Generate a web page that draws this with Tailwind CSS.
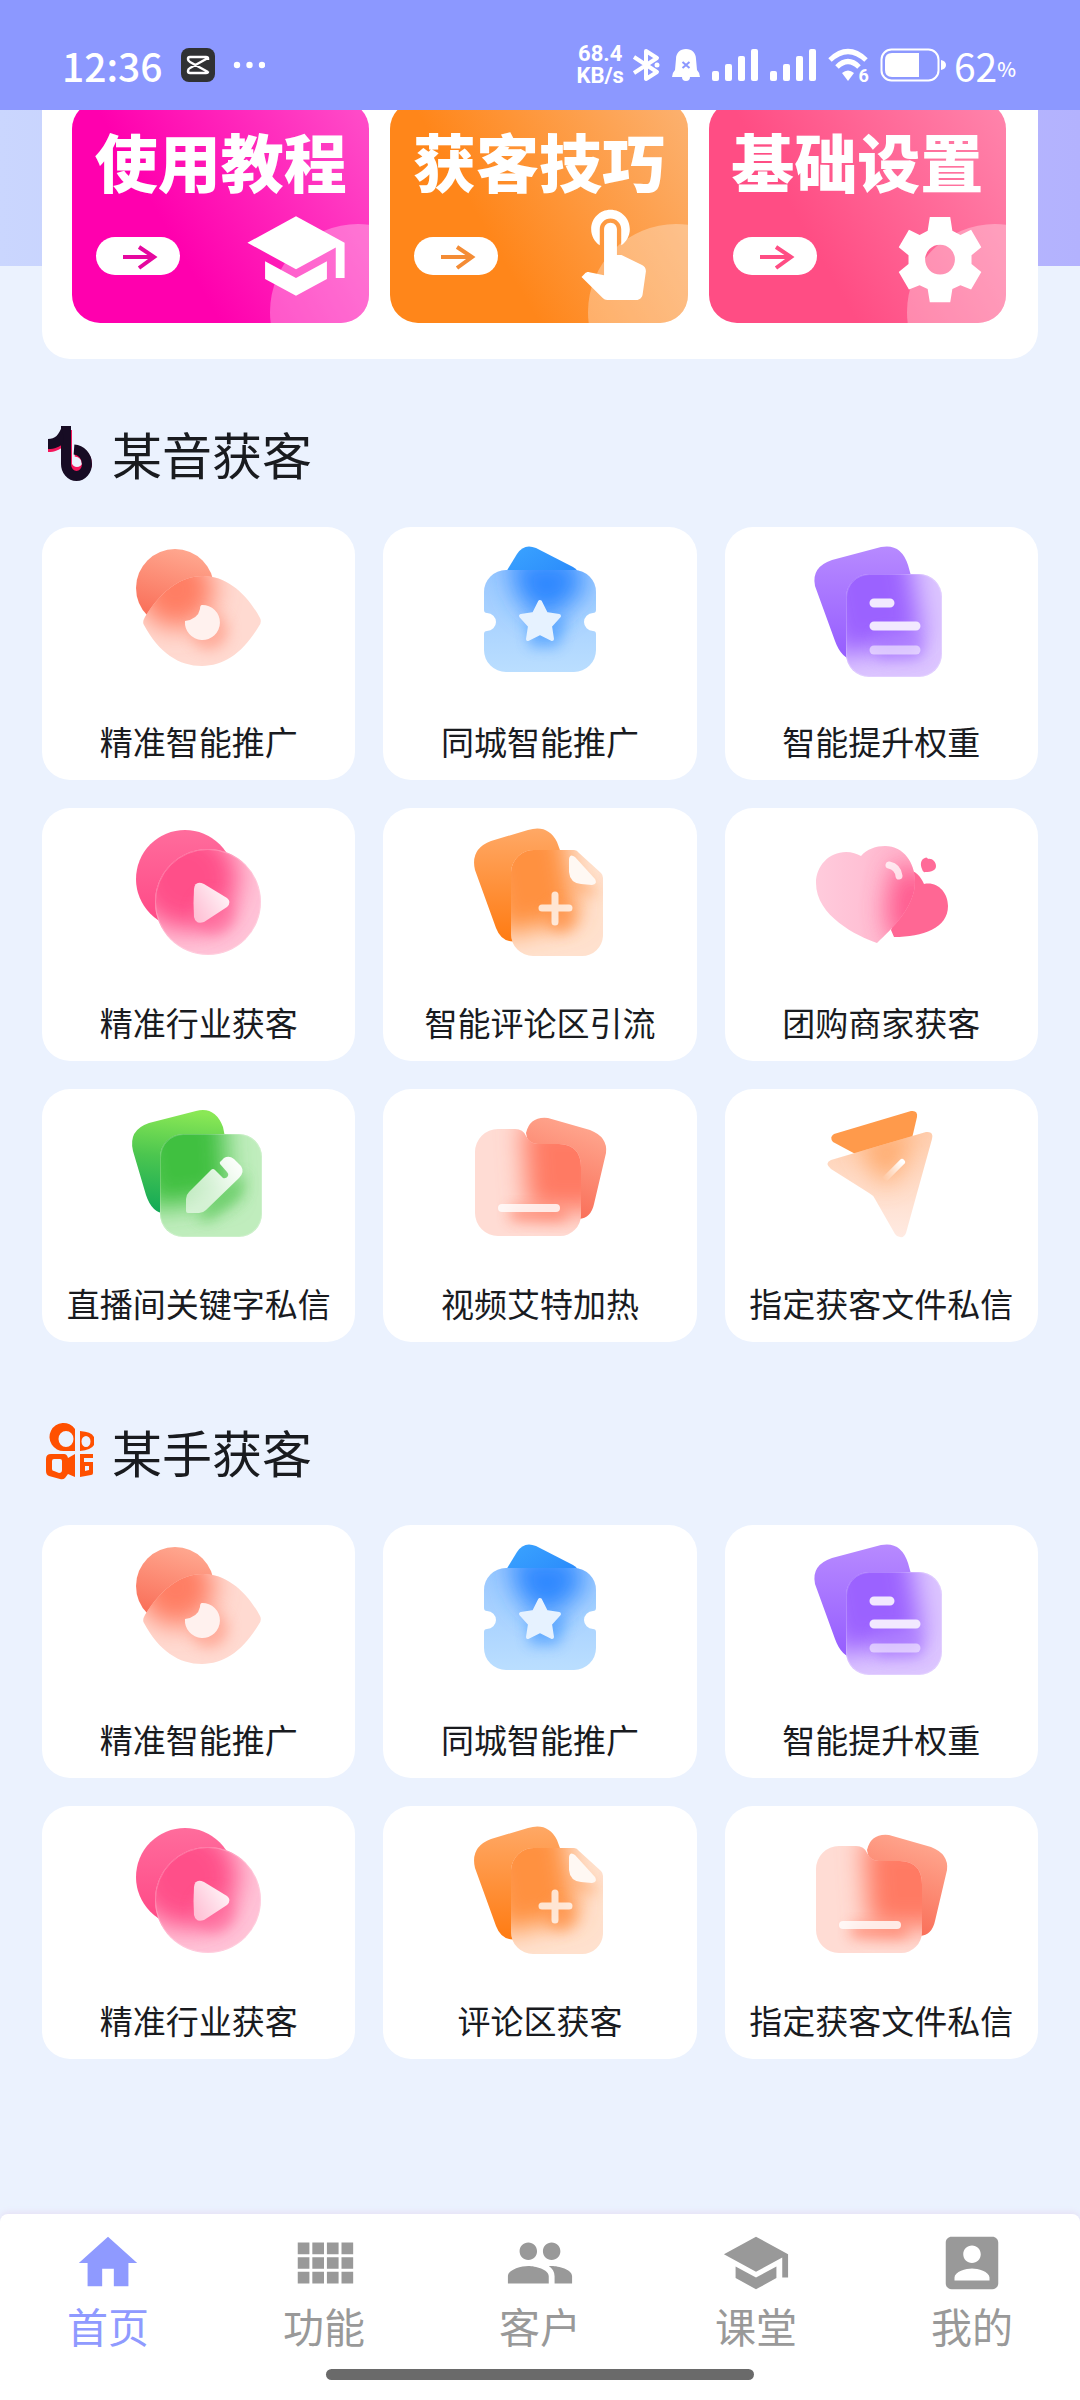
<!doctype html>
<html lang="zh-CN">
  <head>
    <meta charset="UTF-8" />
    <meta name="viewport" content="width=device-width, initial-scale=1.0" />
    <title>首页</title>
    <script src="https://cdn.jsdelivr.net/npm/@tailwindcss/browser@4"></script>
  </head>

  <body class="flex min-h-screen flex-col bg-[#ebf2fe] font-['Noto_Sans_CJK_SC',sans-serif] text-[#191b1f]">
    <!-- Shared gradients, filters and tile icons -->
    <svg class="absolute h-0 w-0" aria-hidden="true">
      <defs>
        <filter id="blur" x="-60%" y="-60%" width="220%" height="220%"><feGaussianBlur stdDeviation="13" /></filter>
        <filter id="soft" x="-80%" y="-80%" width="260%" height="260%"><feGaussianBlur stdDeviation="7" /></filter>
        <linearGradient id="white-d" x1="1" y1="0" x2="0" y2="1"><stop stop-color="#fff" /><stop offset="1" stop-color="#fff" stop-opacity=".55" /></linearGradient>

        <linearGradient id="coral" x1=".6" y1="0" x2=".3" y2="1"><stop stop-color="#ffa78f" /><stop offset="1" stop-color="#f96953" /></linearGradient>
        <linearGradient id="blue" x1="0" y1="0" x2="1" y2="1"><stop stop-color="#3ba4ff" /><stop offset="1" stop-color="#2583fa" /></linearGradient>
        <linearGradient id="blue-l" x1="0" y1="0" x2="0" y2="1"><stop stop-color="#9ac8ff" /><stop offset="1" stop-color="#badeff" /></linearGradient>
        <linearGradient id="purple" x1="0" y1="0" x2="0" y2="1"><stop stop-color="#b78aff" /><stop offset="1" stop-color="#955cff" /></linearGradient>
        <linearGradient id="pink" x1="0" y1="0" x2="0" y2="1"><stop stop-color="#ff6c9c" /><stop offset="1" stop-color="#ff4785" /></linearGradient>
        <linearGradient id="orange" x1="0" y1="0" x2="0" y2="1"><stop stop-color="#ffa865" /><stop offset="1" stop-color="#ff7b12" /></linearGradient>
        <linearGradient id="green" x1=".4" y1="0" x2=".3" y2="1"><stop stop-color="#8ae855" /><stop offset=".45" stop-color="#4cc64f" /><stop offset="1" stop-color="#12a958" /></linearGradient>
        <linearGradient id="heart-l" x1="0" y1="0" x2="1" y2="0"><stop stop-color="#ffcbdc" /><stop offset="1" stop-color="#ffb4cc" /></linearGradient>
        <linearGradient id="plane-l" x1=".6" y1="0" x2=".6" y2="1"><stop stop-color="#ffcfb0" /><stop offset="1" stop-color="#ffeae2" /></linearGradient>
        <linearGradient id="dash" gradientUnits="userSpaceOnUse" x1="101" y1="65" x2="83" y2="83"><stop stop-color="#fff" /><stop offset="1" stop-color="#fff" stop-opacity="0" /></linearGradient>

        <clipPath id="eye-clip"><path id="eye-shape" d="M25 90Q23 87 26 82C42 56 62 41 84 41C108 41 128 59 141 83Q143 87 140 91C124 118 105 131 83 131C60 131 40 118 25 90Z" /></clipPath>
        <symbol id="i-eye" viewBox="0 0 160 160">
          <circle cx="56" cy="53" r="39" fill="url(#coral)" />
          <use href="#eye-shape" fill="#ffdad1" />
          <g clip-path="url(#eye-clip)">
            <circle cx="57" cy="55" r="38" fill="#ff7e63" filter="url(#blur)" />
            <circle cx="90" cy="96" r="19" fill="#ff9580" opacity=".65" filter="url(#soft)" />
          </g>
          <path d="M83 70A17.500 17.500 0 1 1 66 86Q79 84 81 74Q81 70 83 70Z" fill="#fff1ee" />
        </symbol>

        <clipPath id="ticket-clip"><path id="ticket-shape" d="M46 35H114A22 22 0 0 1 136 57V75Q136 78 133 78A9 9 0 0 0 133 96Q136 96 136 99V115A22 22 0 0 1 114 137H46A22 22 0 0 1 24 115V99Q24 96 27 96A9 9 0 0 0 27 78Q24 78 24 75V57A22 22 0 0 1 46 35Z" /></clipPath>
        <symbol id="i-ticket" viewBox="0 0 160 160">
          <path d="M46 37L57 19Q64 8 76 13L113 32Q118 35 118 38L80 60Z" fill="url(#blue)" />
          <use href="#ticket-shape" fill="url(#blue-l)" />
          <g clip-path="url(#ticket-clip)">
            <path d="M50 22H116L124 56L90 84Q62 76 56 55Z" fill="#2f88ff" filter="url(#blur)" />
            <path d="M66 82H108L98 112H70Z" fill="#3f97ff" opacity=".65" filter="url(#soft)" />
          </g>
          <path d="M80 67L86 79L99 81L90 91L92 104L80 98L68 104L70 91L61 81L74 79Z" fill="#e6f2ff" stroke="#e6f2ff" stroke-width="4" stroke-linejoin="round" />
        </symbol>

        <clipPath id="doc-clip"><rect x="45" y="39" width="96" height="103" rx="23" /></clipPath>
        <symbol id="i-doc" viewBox="0 0 160 160">
          <path d="M31 25L80 12Q100 8 107 30L126 98Q127 110 116 113L58 124Q42 128 34 106L14 51Q10 32 31 25Z" fill="url(#purple)" />
          <rect x="45" y="39" width="96" height="103" rx="23" fill="#dcc5ff" />
          <g clip-path="url(#doc-clip)">
            <path d="M15 10H106L122 104L35 122Z" fill="#9b62ff" filter="url(#blur)" />
            <rect x="74" y="97" width="48" height="28" rx="8" fill="#a673ff" opacity=".65" filter="url(#soft)" />
          </g>
          <rect x="45.500" y="39.500" width="95" height="102" rx="23" fill="none" stroke="#fff" stroke-opacity=".2" />
          <g fill="none" stroke="#f2e9ff" stroke-width="9" stroke-linecap="round"><path d="M73 68H89M73 91H115" /><path d="M73 115H115" stroke-opacity=".65" /></g>
        </symbol>

        <clipPath id="play-clip"><circle cx="89" cy="86" r="53" /></clipPath>
        <symbol id="i-play" viewBox="0 0 160 160">
          <circle cx="66" cy="63" r="49" fill="url(#pink)" />
          <circle cx="89" cy="86" r="53" fill="#ffc3d7" />
          <g clip-path="url(#play-clip)">
            <circle cx="67" cy="62" r="52" fill="#ff4f89" filter="url(#blur)" />
            <circle cx="95" cy="98" r="21" fill="#ff6598" opacity=".65" filter="url(#soft)" />
          </g>
          <circle cx="89" cy="86" r="52.500" fill="none" stroke="#fff" stroke-opacity=".2" />
          <path d="M75 73Q76 64 85 68L108 82Q113 86 108 91L85 106Q77 109 75 101Q74 87 75 73Z" fill="url(#white-d)" />
        </symbol>

        <clipPath id="file-clip"><path id="file-shape" d="M75 34H114Q117 34 119 37L141 57Q143 59 143 62V120A21 21 0 0 1 122 140H73A22 22 0 0 1 51 118V56A23 23 0 0 1 75 34Z" /></clipPath>
        <symbol id="i-file" viewBox="0 0 160 160">
          <path d="M31 25L68 14Q88 8 97 26L104 45L112 116L58 125Q42 128 36 112L15 54Q10 33 31 25Z" fill="url(#orange)" />
          <use href="#file-shape" fill="#ffe1ce" />
          <g clip-path="url(#file-clip)">
            <path d="M20 8H102L118 102L40 120Z" fill="#ff9140" filter="url(#blur)" />
            <circle cx="101" cy="102" r="15" fill="#ff9146" opacity=".65" filter="url(#soft)" />
            <path d="M112 60L140 74L132 80L110 72Z" fill="#ff9d58" opacity=".6" filter="url(#soft)" />
          </g>
          <path d="M109 43Q110 37 115 41L135 63Q138 68 132 69L121 68Q110 67 109 56Z" fill="#fff8f3" />
          <path d="M95 79V106M82 92H109" fill="none" stroke="#fff" stroke-opacity=".75" stroke-width="7" stroke-linecap="round" />
        </symbol>

        <clipPath id="heart-clip"><path id="heart-shape" d="M60 40C66 33 75 30 84 30C103 30 114 47 114 66C114 90 92 112 76 127C56 120 15 100 15 67C15 50 28 36 45 36C51 36 56 38 60 40Z" /></clipPath>
        <symbol id="i-hearts" viewBox="0 0 160 160">
          <path d="M100 56C110 50 119 58 123 68C136 65 147 76 147 90C147 112 122 121 93 121L90 114L100 86Z" fill="#ff6794" />
          <use href="#heart-shape" fill="url(#heart-l)" />
          <g clip-path="url(#heart-clip)"><path d="M94 46L136 62V120L92 128L84 92Z" fill="#ff5289" opacity=".9" filter="url(#blur)" /></g>
          <path d="M88 49Q97 51 98 60" fill="none" stroke="#fff" stroke-opacity=".75" stroke-width="7" stroke-linecap="round" />
          <path d="M127 43C131 42 135 46 135 50C135 54 131 56 124 56Q122 57 121 53C119 48 120 45 122 43Q126 40 127 43Z" fill="#ff6b98" />
        </symbol>

        <clipPath id="edit-clip"><rect x="41" y="37" width="102" height="103" rx="23" /></clipPath>
        <symbol id="i-edit" viewBox="0 0 160 160">
          <path d="M30 26L77 14Q96 9 104 30L110 60L112 104L50 116Q34 119 27 98L14 54Q9 33 30 26Z" fill="url(#green)" />
          <rect x="41" y="37" width="102" height="103" rx="23" fill="#c0edbd" />
          <g clip-path="url(#edit-clip)">
            <path d="M12 10H104L110 100L30 112Z" fill="#3fc041" filter="url(#blur)" />
            <path d="M76 120L126 76L124 98L90 124Z" fill="#55c653" opacity=".7" filter="url(#soft)" />
          </g>
          <rect x="41.500" y="37.500" width="101" height="102" rx="23" fill="none" stroke="#fff" stroke-opacity=".2" />
          <path d="M67 102Q67 98 70 95L92 73Q94 71 96 73L104 81Q107 82 109 79Q110 77 108 75L101 67Q100 65 102 64L105 61Q110 58 115 62L122 69Q126 75 120 81L87 113Q84 116 80 116H69Q67 116 67 114Z" fill="url(#white-d)" />
        </symbol>

        <clipPath id="folder-clip"><path id="folder-shape" d="M38 32H55Q63 32 66 39Q70 47 78 47H99Q121 48 121 70V118A21 21 0 0 1 100 139H38A23 23 0 0 1 15 116V55A23 23 0 0 1 38 32Z" /></clipPath>
        <symbol id="i-folder" viewBox="0 0 160 160">
          <path d="M66 36Q70 19 88 21L130 33Q148 40 146 56L134 107Q131 121 119 122L80 100Z" fill="url(#coral)" />
          <use href="#folder-shape" fill="#ffdcd4" />
          <g clip-path="url(#folder-clip)">
            <path d="M62 24H150V114H68Z" fill="#ff7a64" filter="url(#blur)" />
            <rect x="50" y="110" width="56" height="14" fill="#ff8670" opacity=".8" filter="url(#soft)" />
          </g>
          <path d="M42 111H96" fill="none" stroke="#fff" stroke-opacity=".8" stroke-width="8" stroke-linecap="round" />
        </symbol>

        <clipPath id="plane-clip"><path id="plane-shape" d="M30 63L125 35Q133 34 131 42L105 136Q103 141 99 140Q96 140 94 137L74 102Q72 98 68 96L30 72Q23 66 30 63Z" /></clipPath>
        <symbol id="i-plane" viewBox="0 0 160 160">
          <path d="M33 37L110 14Q117 13 116 20L108 54L60 60L32 45Q28 40 33 37Z" fill="#ff9a4b" />
          <use href="#plane-shape" fill="url(#plane-l)" />
          <g clip-path="url(#plane-clip)"><path d="M54 44L114 30L98 76L84 90Z" fill="#ffa05a" opacity=".8" filter="url(#blur)" /></g>
          <path d="M84 82L101 65" stroke="url(#dash)" stroke-width="6" stroke-linecap="round" />
        </symbol>

        <symbol id="i-school" viewBox="0 0 24 24"><path d="M5 13.180v4L12 21l7-3.820v-4L12 17l-7-3.820zM12 3L1 9l11 6 9-4.910V17h2V9L12 3z" /></symbol>
      </defs>
    </svg>

    <header class="flex h-[110px] items-center justify-between bg-[#8c98ff] pt-5 pr-16 pl-[62px] text-white">
      <div class="flex items-center gap-[18px]">
        <span class="text-[39px] leading-10 font-medium">12:36</span>
        <svg class="size-[34px]" viewBox="0 0 34 34" aria-hidden="true">
          <rect width="34" height="34" rx="8" fill="#303133" />
          <path d="M27 12V10.500Q27 9 25 9H9Q7 9 7 11T9 14L27 24M27 23.500Q27 25 25 25H9Q7 25 7 23T9 20L27 10" fill="none" stroke="#fff" stroke-width="2.500" />
        </svg>
        <svg class="h-2 w-8" viewBox="0 0 32 8" fill="#fff" aria-hidden="true"><circle cx="4" cy="4" r="3.200" /><circle cx="16.500" cy="4" r="3.200" /><circle cx="29" cy="4" r="3.200" /></svg>
      </div>
      <div class="flex items-center">
        <div class="mr-2 flex flex-col items-center font-['Roboto'] text-[22px] leading-[22px] font-bold">
          <span>68.4</span>
          <span>KB/s</span>
        </div>
        <svg class="mr-3 h-[34px] w-7" viewBox="0 0 28 34" fill="none" stroke="#fff" aria-hidden="true">
          <path d="M2 9L25 24L14 31V3L25 10L2 25" stroke-width="4" stroke-linejoin="round" />
          <circle cx="25" cy="17" r="2.500" fill="#fff" stroke="none" />
        </svg>
        <svg class="mr-3 h-[34px] w-7" viewBox="0 0 28 34" aria-hidden="true">
          <path d="M14 1C20 1 24 5 24 11L25 22Q28 25 28 29H18A4 4 0 0 1 10 29H0Q0 25 3 22L4 11C4 5 8 1 14 1Z" fill="#fff" />
          <path d="M10.500 14L17.500 20M17.500 14L10.500 20" stroke="#8c98ff" stroke-width="2" />
        </svg>
        <svg class="mr-3 h-8 w-[46px]" viewBox="0 0 46 32" fill="#fff" aria-hidden="true"><rect y="22" width="7" height="10" rx="2" /><rect x="13" y="15" width="7" height="17" rx="2" /><rect x="26" y="7" width="7" height="25" rx="2" /><rect x="39" width="7" height="32" rx="2" /></svg>
        <svg class="mr-3 h-8 w-[46px]" viewBox="0 0 46 32" fill="#fff" aria-hidden="true"><rect y="22" width="7" height="10" rx="2" /><rect x="13" y="15" width="7" height="17" rx="2" /><rect x="26" y="7" width="7" height="25" rx="2" /><rect x="39" width="7" height="32" rx="2" /></svg>
        <div class="relative mr-3 h-[34px] w-10">
          <svg class="h-[34px] w-10" viewBox="0 0 40 34" fill="none" stroke="#fff" stroke-width="5" aria-hidden="true">
            <path d="M2 12Q20 -5 38 12M9 19Q20 8 31 19" />
            <path d="M14 25Q20 20 26 25L20 33Z" fill="#fff" stroke="none" />
          </svg>
          <span class="absolute -right-px -bottom-1 font-['Roboto'] text-[18px] leading-5 font-bold">6</span>
        </div>
        <svg class="mr-2 h-[34px] w-[66px]" viewBox="0 0 66 34" aria-hidden="true">
          <rect x="1.500" y="1.500" width="57" height="31" rx="10" fill="none" stroke="#fff" stroke-width="2" />
          <path d="M12 5H39V29H12Q5 29 5 22V12Q5 5 12 5ZM61 12Q66 13 66 17T61 22Z" fill="#fff" />
        </svg>
        <span class="text-[39px] leading-10">62</span><span class="pt-2 text-[20px] leading-8 font-medium">%</span>
      </div>
    </header>

    <main class="flex-1">
      <div class="bg-[linear-gradient(to_right,#cad6fe,#b3b2fe)] bg-[length:100%_156px] bg-no-repeat px-[42px]">
        <div class="overflow-hidden rounded-b-[28px] bg-white pr-8 pb-9 pl-[30px]">
          <div class="-mt-[9px] grid grid-cols-3 gap-[21px]">
            <a href="#" class="relative h-[222px] overflow-hidden rounded-[28px] bg-[linear-gradient(60deg,#ff00ae_35%,#ff4fc9)] text-[#e5089f]">
              <div class="absolute top-[123px] left-[198px] size-[176px] rounded-full bg-white/30"></div>
              <p class="relative pt-[26px] text-center text-[63px] leading-[66px] font-black text-white">使用教程</p>
              <div class="relative mt-[10px] flex items-center justify-between pr-5 pl-6">
                <svg class="h-[38px] w-[84px] rounded-full bg-white" viewBox="0 0 84 38" fill="none" stroke="currentColor" stroke-width="4" aria-hidden="true"><path d="M27 20H57M43 10L58 20L43 31" /></svg>
                <svg class="size-[106px] fill-white" viewBox="0 0 24 24" aria-hidden="true"><use href="#i-school" /></svg>
              </div>
            </a>
            <a href="#" class="relative h-[222px] overflow-hidden rounded-[28px] bg-[linear-gradient(60deg,#ff861a_35%,#fcb271)] text-[#f48c35]">
              <div class="absolute top-[123px] left-[198px] size-[176px] rounded-full bg-white/30"></div>
              <p class="relative pt-[26px] text-center text-[63px] leading-[66px] font-black text-white">获客技巧</p>
              <div class="relative mt-[10px] flex items-center justify-between pr-5 pl-6">
                <svg class="h-[38px] w-[84px] rounded-full bg-white" viewBox="0 0 84 38" fill="none" stroke="currentColor" stroke-width="4" aria-hidden="true"><path d="M27 20H57M43 10L58 20L43 31" /></svg>
                <svg class="size-[106px] fill-white" viewBox="0.2 1.4 24.7 24.7" aria-hidden="true">
                  <path d="M9 11.240V7.500C9 6.120 10.120 5 11.500 5S14 6.120 14 7.500v3.740c1.210-.810 2-2.180 2-3.740C16 5.010 13.990 3 11.500 3S7 5.010 7 7.500c0 1.560.790 2.930 2 3.740zm9.840 4.630l-4.540-2.260c-.170-.070-.350-.110-.540-.110H13v-6c0-.830-.670-1.500-1.500-1.500S10 6.670 10 7.500v10.740l-3.430-.720c-.080-.010-.150-.030-.240-.030-.310 0-.590.130-.790.330l-.790.800 4.940 4.940c.270.270.650.440 1.060.440h6.790c.750 0 1.330-.550 1.440-1.280l.750-5.270c.010-.070.020-.140.020-.200 0-.620-.380-1.160-.910-1.380z" />
                </svg>
              </div>
            </a>
            <a href="#" class="relative h-[222px] overflow-hidden rounded-[28px] bg-[linear-gradient(60deg,#ff4d84_35%,#ff85ac)] text-[#ff4d84]">
              <div class="absolute top-[123px] left-[198px] size-[176px] rounded-full bg-white/30"></div>
              <p class="relative pt-[26px] text-center text-[63px] leading-[66px] font-black text-white">基础设置</p>
              <div class="relative mt-[10px] flex items-center justify-between pr-5 pl-6">
                <svg class="h-[38px] w-[84px] rounded-full bg-white" viewBox="0 0 84 38" fill="none" stroke="currentColor" stroke-width="4" aria-hidden="true"><path d="M27 20H57M43 10L58 20L43 31" /></svg>
                <svg class="size-[106px] fill-white" viewBox="-2.1 -1.3 24.9 24.9" aria-hidden="true">
                  <path fill-rule="evenodd" d="M9.600 2H14.400L14.900 5.200L16.800 6.200L19.300 5L21.700 9.100L19.400 11V13L21.700 14.900L19.300 19L16.800 18L14.900 18.900L14.400 22H9.600L9.100 18.900L7.200 18L4.700 19L2.300 14.900L4.600 13V11L2.300 9.100L4.700 5L7.200 6.200L9.100 5.200ZM12 8.500A3.500 3.500 0 1 0 12 15.500A3.500 3.500 0 1 0 12 8.500Z" />
                </svg>
              </div>
            </a>
          </div>
        </div>
      </div>

      <section class="px-[42px] pt-[58px]">
        <h2 class="flex items-center gap-[18px] pb-[38px] text-[50px] leading-[72px]">
          <svg class="ml-1 h-[60px] w-12" viewBox="0 0 48 60" aria-hidden="true">
            <path d="M21 7V42A11 12 0 0 0 41 42C41 34 36 29 29 28.500" fill="none" stroke="#f5175c" stroke-width="10" />
            <path d="M16 6C14 15 9 19 2 19V29C9 29 13 27 18 23Z" fill="#f5175c" />
            <path d="M20 3V41A10.500 12 0 0 0 41 41C41 33 35 27 28 26.500" fill="none" stroke="#170c24" stroke-width="10" />
            <path d="M16 3C13 12 9 16 2 16V26C9 26 13 24 18 20Z" fill="#170c24" />
          </svg>
          某音获客
        </h2>
        <div id="douyin-grid" class="grid grid-cols-3 gap-7"></div>
      </section>

      <section class="px-[42px] pt-[73px] pb-20">
        <h2 class="flex items-center gap-[18px] pb-[38px] text-[50px] leading-[72px]">
          <svg class="ml-1 h-[60px] w-12" viewBox="0 0 48 60" fill="#ff5000" fill-rule="evenodd" aria-hidden="true">
            <path d="M29 8V30H18A14 14 0 1 1 29 8ZM20 10A7.500 8 0 1 0 20 26A7.500 8 0 1 0 20 10Z" />
            <path d="M34 10Q49 11 49 20T34 30ZM40 15A4.500 5.500 0 1 0 40 26A4.500 5.500 0 1 0 40 15Z" />
            <path d="M5 33H18Q21 33 22 37L29 33V56L22 53L19 57Q17 59 14 58L3 55Q0 54 0 50V38Q0 33 5 33ZM8 38Q6 38 6 40V48Q6 50 8 50L13 52Q16 52 16 49V40Q16 38 14 38Z" />
            <path d="M34 33H47V37H38V41H47V52Q47 54 45 54L34 56ZM39 45V50L43 49V45Z" />
          </svg>
          某手获客
        </h2>
        <div id="kuaishou-grid" class="grid grid-cols-3 gap-7"></div>
      </section>
    </main>

    <nav class="flex h-[186px] flex-col rounded-t-lg bg-white pt-[14px] shadow-[0_-2px_6px_#e6e0f5]">
      <div class="grid grid-cols-5 text-[41px] leading-[54px] text-[#999]">
        <a href="#" class="flex flex-col items-center text-[#8f9aff]" aria-current="page">
          <svg class="size-[70px] fill-current" viewBox="0 0 24 24" aria-hidden="true"><path d="M10 20v-6h4v6h5v-8h3L12 3 2 12h3v8z" /></svg>
          首页
        </a>
        <a href="#" class="flex flex-col items-center">
          <svg class="size-[70px] fill-current" viewBox="0 0 24 24" aria-hidden="true"><path d="M3 9h4V5H3v4zm0 5h4v-4H3v4zm5 0h4v-4H8v4zm5 0h4v-4h-4v4zM8 9h4V5H8v4zm5-4v4h4V5h-4zm5 9h4v-4h-4v4zM3 19h4v-4H3v4zm5 0h4v-4H8v4zm5 0h4v-4h-4v4zm5 0h4v-4h-4v4zm0-14v4h4V5h-4z" /></svg>
          功能
        </a>
        <a href="#" class="flex flex-col items-center">
          <svg class="size-[70px] fill-current" viewBox="0 0 24 24" aria-hidden="true"><path d="M16 11c1.660 0 2.990-1.340 2.990-3S17.660 5 16 5c-1.660 0-3 1.340-3 3s1.340 3 3 3zm-8 0c1.660 0 2.990-1.340 2.990-3S9.660 5 8 5C6.340 5 5 6.340 5 8s1.340 3 3 3zm0 2c-2.330 0-7 1.170-7 3.500V19h14v-2.500c0-2.330-4.670-3.500-7-3.500zm8 0c-.290 0-.620.020-.970.050 1.160.840 1.970 1.970 1.970 3.450V19h6v-2.500c0-2.330-4.670-3.500-7-3.500z" /></svg>
          客户
        </a>
        <a href="#" class="flex flex-col items-center">
          <svg class="size-[70px] fill-current" viewBox="0 0 24 24" aria-hidden="true"><use href="#i-school" /></svg>
          课堂
        </a>
        <a href="#" class="flex flex-col items-center">
          <svg class="size-[70px] fill-current" viewBox="0 0 24 24" aria-hidden="true"><path d="M3 5v14c0 1.100.890 2 2 2h14c1.100 0 2-.900 2-2V5c0-1.100-.900-2-2-2H5c-1.110 0-2 .900-2 2zm12 4c0 1.660-1.340 3-3 3s-3-1.340-3-3 1.340-3 3-3 3 1.340 3 3zm-9 8c0-2 4-3.100 6-3.100s6 1.100 6 3.100v1H6v-1z" /></svg>
          我的
        </a>
      </div>
      <div class="mx-auto mt-[17px] h-[11px] w-[428px] rounded-full bg-[#6a6a6a]"></div>
    </nav>

    <script>
      // Tiles of each section: [icon id, label]
      let douyin = [
        ["i-eye", "精准智能推广"],
        ["i-ticket", "同城智能推广"],
        ["i-doc", "智能提升权重"],
        ["i-play", "精准行业获客"],
        ["i-file", "智能评论区引流"],
        ["i-hearts", "团购商家获客"],
        ["i-edit", "直播间关键字私信"],
        ["i-folder", "视频艾特加热"],
        ["i-plane", "指定获客文件私信"],
      ];
      let kuaishou = [
        ["i-eye", "精准智能推广"],
        ["i-ticket", "同城智能推广"],
        ["i-doc", "智能提升权重"],
        ["i-play", "精准行业获客"],
        ["i-file", "评论区获客"],
        ["i-folder", "指定获客文件私信"],
      ];

      function fillGrid(id, tiles) {
        let grid = document.getElementById(id);
        for (let [icon, label] of tiles) {
          let tile = document.createElement("a");
          tile.href = "#";
          tile.className =
            "flex h-[253px] flex-col items-center rounded-[28px] bg-white pt-2 text-[33px] leading-[44px]";
          tile.innerHTML =
            '<svg class="size-40" aria-hidden="true"><use href="#' +
            icon +
            '"></use></svg><span class="mt-6">' +
            label +
            "</span>";
          grid.append(tile);
        }
      }

      fillGrid("douyin-grid", douyin);
      fillGrid("kuaishou-grid", kuaishou);
    </script>
  </body>
</html>
